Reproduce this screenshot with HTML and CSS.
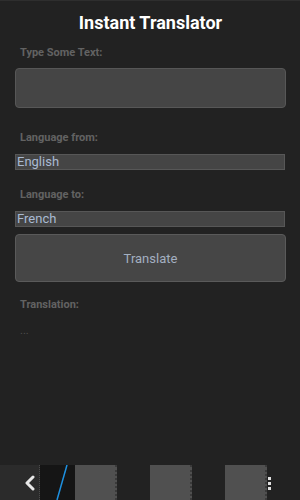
FILE: index.html
```html
<!DOCTYPE html>
<html lang="en">
<head>
    <meta charset="UTF-8">
    <meta name="viewport" content="width=device-width, initial-scale=1.0">
    <title>Instant Translator</title>
    <link rel="stylesheet" href="styles.css">
</head>
<body>
    <div class="app">
        <div class="content">
            <h1 class="title">Instant Translator</h1>

            <label class="label">Type Some Text:</label>
            <div class="text-box"></div>

            <label class="label">Language from:</label>
            <div class="select">English</div>

            <label class="label">Language to:</label>
            <div class="select">French</div>

            <button class="translate-btn">Translate</button>

            <label class="label">Translation:</label>
            <div class="result">...</div>
        </div>

        <div class="nav-bar">
            <div class="nav-back">
                <svg width="12" height="16" viewBox="0 0 12 16">
                    <path d="M9 2 L3 8 L9 14" fill="none" stroke="#e8e8e8" stroke-width="3" stroke-linecap="round" stroke-linejoin="round"/>
                </svg>
            </div>
            <div class="nav-slash">
                <svg width="35" height="35" viewBox="0 0 35 35">
                    <line x1="27" y1="0" x2="17" y2="35" stroke="#1e90e0" stroke-width="1.5"/>
                </svg>
            </div>
            <div class="nav-tile"></div>
            <div class="nav-gap"></div>
            <div class="nav-tile"></div>
            <div class="nav-gap"></div>
            <div class="nav-tile"></div>
            <div class="nav-menu">
                <span class="dot"></span>
                <span class="dot"></span>
                <span class="dot"></span>
            </div>
        </div>
    </div>
</body>
</html>
```

FILE: styles.css
```css
html, body {
    margin: 0;
    padding: 0;
    height: 100%;
}

body {
    background: #222222;
    font-family: Roboto, "Liberation Sans", sans-serif;
    border-top: 1px solid #2e2e2e;
    box-sizing: border-box;
}

.app {
    display: flex;
    flex-direction: column;
    height: 100%;
}

.content {
    flex: 1;
    display: flex;
    flex-direction: column;
    padding: 0 14px 0 15px;
}

.title {
    margin: 11px 0 0;
    text-align: center;
    color: #ffffff;
    font-size: 18px;
    font-weight: bold;
    line-height: 22px;
}

.label {
    color: #626262;
    font-size: 11px;
    font-weight: bold;
    padding-left: 5px;
    line-height: 14px;
}

.title + .label {
    margin-top: 12px;
}

.text-box {
    margin-top: 8px;
    height: 38px;
    background: #454545;
    border: 1px solid #575757;
    border-radius: 4px;
}

.text-box + .label {
    margin-top: 23px;
}

.select {
    margin-top: 9px;
    width: 267px;
    height: 14px;
    background: #454545;
    border: 1px solid #575757;
    color: #a9bad2;
    font-size: 13px;
    line-height: 14px;
    padding-left: 1px;
}

.select + .label {
    margin-top: 18px;
}

.select + .translate-btn {
    margin-top: 7px;
}

.translate-btn {
    height: 48px;
    background: #464646;
    border: 1px solid #5a5a5a;
    border-radius: 4px;
    color: #a3afc0;
    font-family: inherit;
    font-size: 13px;
    padding: 0;
}

.translate-btn + .label {
    margin-top: 16px;
}

.result {
    margin-top: 12px;
    padding-left: 5px;
    color: #4e4e4e;
    font-size: 11px;
    line-height: 14px;
}

.nav-bar {
    display: flex;
    height: 35px;
    background: #222222;
}

.nav-back {
    width: 40px;
    background: #2b2b2b;
    border-right: 1px dotted #4a4a4a;
    display: flex;
    align-items: center;
    justify-content: center;
    padding-left: 20px;
    box-sizing: border-box;
}

.nav-slash {
    width: 35px;
    background: #151515;
}

.nav-slash svg {
    display: block;
}

.nav-tile {
    width: 40px;
    background: #505050;
    border-right: 2px dotted #3a3a3a;
}

.nav-gap {
    width: 33px;
    background: #222222;
}

.nav-menu {
    flex: 1;
    display: flex;
    flex-direction: column;
    gap: 2px;
    padding: 12px 0 0 1px;
}

.dot {
    width: 3px;
    height: 3px;
    background: #e0e0e0;
}
```
